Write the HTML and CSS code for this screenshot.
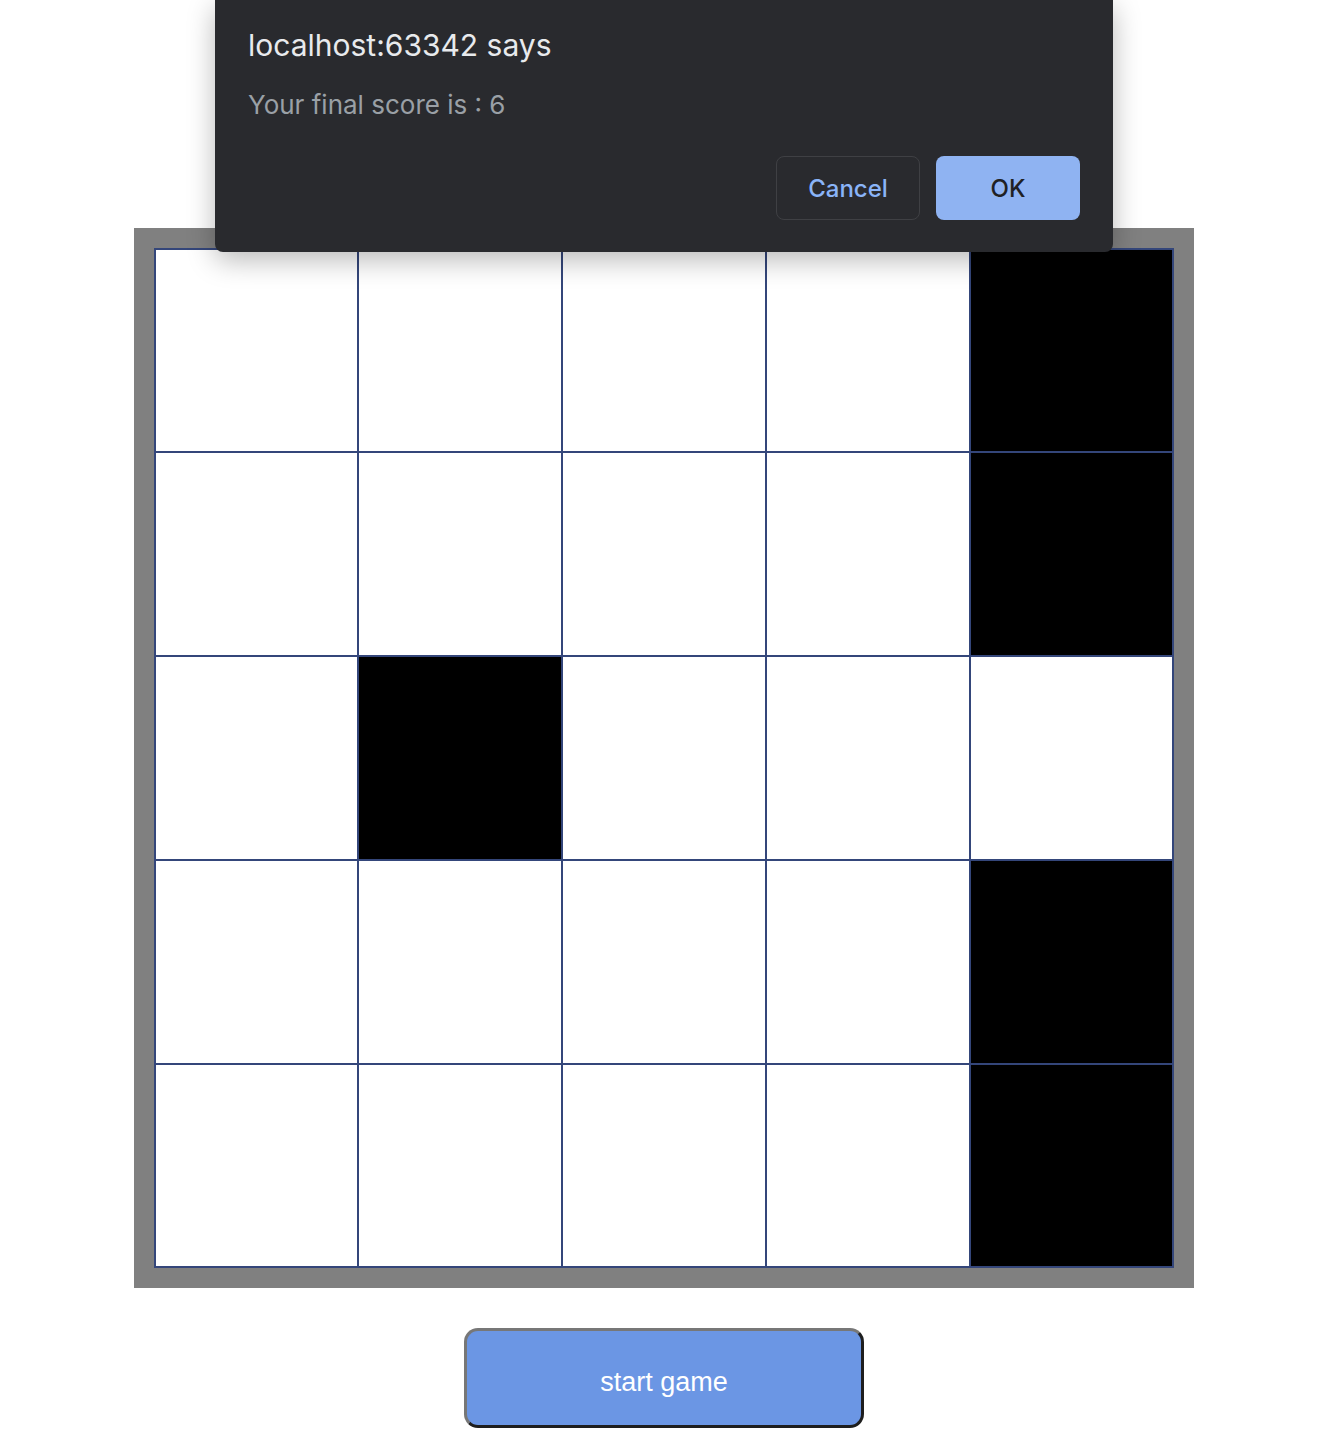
FILE: index.html
```html
<!DOCTYPE html>
<html>
<head>
<meta charset="utf-8">
<title>Game</title>
<link rel="stylesheet" href="styles.css">
</head>
<body>
<main class="page">
  <div class="frame">
    <div class="grid">
      <div class="cell"></div><div class="cell"></div><div class="cell"></div><div class="cell"></div><div class="cell on"></div>
      <div class="cell"></div><div class="cell"></div><div class="cell"></div><div class="cell"></div><div class="cell on"></div>
      <div class="cell"></div><div class="cell on"></div><div class="cell"></div><div class="cell"></div><div class="cell"></div>
      <div class="cell"></div><div class="cell"></div><div class="cell"></div><div class="cell"></div><div class="cell on"></div>
      <div class="cell"></div><div class="cell"></div><div class="cell"></div><div class="cell"></div><div class="cell on"></div>
    </div>
  </div>
  <button class="start">start game</button>
</main>
<div class="dialog">
  <div class="dialog-title">localhost:63342 says</div>
  <div class="dialog-msg">Your final score is : 6</div>
  <div class="dialog-actions">
    <button class="btn cancel">Cancel</button>
    <button class="btn ok">OK</button>
  </div>
</div>
</body>
</html>
```
FILE: styles.css
```css
html, body {
  margin: 0;
  padding: 0;
  background: #ffffff;
}
.page {
  display: flex;
  flex-direction: column;
  align-items: center;
  padding-top: 228px;
}
.frame {
  width: 1020px;
  height: 1020px;
  padding: 20px;
  background: #808080;
}
.grid {
  display: grid;
  grid-template-columns: 201px 202px 202px 202px 201px;
  grid-template-rows: 201px 202px 202px 202px 201px;
  gap: 2px;
  padding: 2px;
  width: 1020px;
  height: 1020px;
  box-sizing: border-box;
  background: #34467a;
}
.cell {
  background: #ffffff;
}
.cell.on {
  background: #000000;
}
.start {
  margin-top: 40px;
  width: 400px;
  height: 100px;
  box-sizing: border-box;
  border: 3px solid;
  border-color: #777777 #1e1e1e #1e1e1e #777777;
  border-radius: 14px;
  background: #6b96e4;
  color: #ffffff;
  font-family: "Liberation Sans", Arial, sans-serif;
  font-size: 27px;
  padding: 9px 0 0 0;
}
.dialog {
  position: absolute;
  top: 0;
  left: 215px;
  width: 898px;
  height: 252px;
  box-sizing: border-box;
  padding: 27px 33px 0 33px;
  background: #292a2e;
  border-radius: 0 0 8px 8px;
  box-shadow: 0 8px 28px rgba(0, 0, 0, 0.28);
  font-family: Inter, "Noto Sans", sans-serif;
}
.dialog-title {
  color: #e8eaed;
  font-size: 30px;
  line-height: 36px;
}
.dialog-msg {
  margin-top: 26px;
  color: #9aa0a6;
  font-size: 26px;
  line-height: 32px;
}
.dialog-actions {
  display: flex;
  justify-content: flex-end;
  gap: 16px;
  margin-top: 35px;
}
.btn {
  width: 144px;
  height: 64px;
  box-sizing: border-box;
  border-radius: 8px;
  font-family: Inter, "Noto Sans", sans-serif;
  font-size: 24px;
  font-weight: 500;
  padding: 0;
}
.cancel {
  background: transparent;
  border: 1px solid #3f4044;
  color: #8ab4f8;
}
.ok {
  background: #8fb3f2;
  border: none;
  color: #202124;
}
```
